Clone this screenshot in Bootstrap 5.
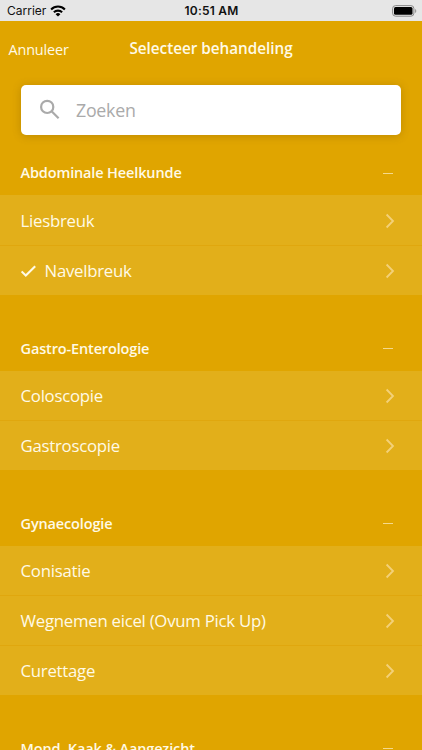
<!DOCTYPE html>
<html lang="nl">
<head>
<meta charset="utf-8">
<meta name="viewport" content="width=device-width, initial-scale=1">
<title>Selecteer behandeling</title>
<link href="https://cdn.jsdelivr.net/npm/bootstrap@5.3.0/dist/css/bootstrap.min.css" rel="stylesheet">
<style>
html, body { height: 100%; }
body { background: #e0a500; color: #fffae6; font-family: "Open Sans", sans-serif; overflow: hidden; }
.screen { height: 750px; }
.statusbar { height: 21px; background: #e6e6e6; color: #111; font-family: Inter, sans-serif; font-size: 12px; line-height: 21px; padding: 0 5px 0 7px; }
.statusbar .clock { font-weight: 600; font-size: 12px; letter-spacing: .22px; margin-right: 1px; }
.topbar { height: 64px; }
.cancel { font-size: 14.4px; letter-spacing: -.13px; line-height: 20px; padding: 19px 0 0 8.5px; }
.title { font-size: 15.3px; letter-spacing: -.03px; line-height: 20px; font-weight: 600; padding-top: 17px; }
.search { height: 50px; margin: 0 21px; border-radius: 5px; padding-left: 18px; box-shadow: 0 1px 8px rgba(110, 75, 0, .3); color: #aaa; }
.search input { font-size: 17.8px; letter-spacing: -.25px; color: #aaa; padding: 1px 0 0; margin-left: 15px; }
.search input::placeholder { color: #aaa; opacity: 1; }
.group-head { height: 76px; padding: 31px 29px 0 20.5px; font-size: 14.5px; letter-spacing: -.14px; font-weight: 600; }
.group-head.first { height: 60px; padding-top: 16px; }
.dash { width: 10px; height: 1px; background: #f4d98c; }
.treatments .list-group-item { height: 50px; padding: 1px 27px 0 20.5px; background: #e2af1a; color: #fffae6; font-size: 16.8px; letter-spacing: -.26px; border-color: #e0a70e; border-width: 1px 0 0; }
.treatments .list-group-item:first-child { height: 49px; border-top-width: 0; padding-top: 1px; }
.group-head.first + .treatments .list-group-item:first-child { height: 50px; padding-top: 2px; }
.treatments svg { flex: none; }
</style>
<script src="https://cdn.jsdelivr.net/npm/bootstrap@5.3.0/dist/js/bootstrap.bundle.min.js"></script>
</head>
<body>
<svg class="d-none">
  <symbol id="chevron" viewBox="0 0 10 16"><path d="M1.600 1.500L8 8l-6.400 6.500" fill="none" stroke="#f3d17a" stroke-width="1.800"/></symbol>
</svg>
<div class="screen overflow-hidden">
  <div class="statusbar row g-0">
    <div class="col d-flex align-items-center"><span>Carrier</span>
      <svg class="ms-1" width="16" height="12" viewBox="0 0 16 12"><g fill="none" stroke="#000" stroke-width="2.100"><path d="M1.100 4.400a9.800 9.800 0 0 1 13.800 0"/><path d="M3.900 7.300a5.800 5.800 0 0 1 8.200 0"/></g><path d="M8 11.600L5.600 9.200a3.400 3.400 0 0 1 4.800 0z"/></svg>
    </div>
    <div class="col-auto clock">10:51 AM</div>
    <div class="col d-flex align-items-center justify-content-end">
      <svg width="25" height="12" viewBox="0 0 25 12"><rect x=".6" y=".6" width="21.300" height="10.600" rx="3" fill="none" stroke="#888" stroke-width="1"/><rect x="2" y="2" width="18.500" height="7.800" rx="1.500"/><path d="M23.200 4v4c1.400-.6 1.400-3.400 0-4z" fill="#888"/></svg>
    </div>
  </div>
  <header class="topbar row g-0">
    <div class="col"><div class="cancel">Annuleer</div></div>
    <div class="col-auto title">Selecteer behandeling</div>
    <div class="col"></div>
  </header>
  <div class="search bg-white d-flex align-items-center">
    <svg class="flex-shrink-0" width="22" height="22" viewBox="0 0 22 22" fill="none" stroke="#aaa" stroke-width="2.200"><circle cx="8.200" cy="7.900" r="6.100"/><path d="M12.600 12.300l7 7"/></svg>
    <input class="form-control border-0 shadow-none bg-transparent" type="text" placeholder="Zoeken">
  </div>

  <div class="group-head first d-flex align-items-center justify-content-between"><span>Abdominale Heelkunde</span><i class="dash"></i></div>
  <div class="treatments list-group list-group-flush">
    <div class="list-group-item d-flex align-items-center"><span>Liesbreuk</span><svg class="ms-auto" width="10" height="16"><use href="#chevron"/></svg></div>
    <div class="list-group-item d-flex align-items-center"><svg width="16" height="14" viewBox="0 0 16 14"><path d="M.6 7.400l4.200 4.100L14.200 2.200" fill="none" stroke="#fffae6" stroke-width="2.100"/></svg><span class="ms-2">Navelbreuk</span><svg class="ms-auto" width="10" height="16"><use href="#chevron"/></svg></div>
  </div>

  <div class="group-head d-flex align-items-center justify-content-between"><span>Gastro-Enterologie</span><i class="dash"></i></div>
  <div class="treatments list-group list-group-flush">
    <div class="list-group-item d-flex align-items-center"><span>Coloscopie</span><svg class="ms-auto" width="10" height="16"><use href="#chevron"/></svg></div>
    <div class="list-group-item d-flex align-items-center"><span>Gastroscopie</span><svg class="ms-auto" width="10" height="16"><use href="#chevron"/></svg></div>
  </div>

  <div class="group-head d-flex align-items-center justify-content-between"><span>Gynaecologie</span><i class="dash"></i></div>
  <div class="treatments list-group list-group-flush">
    <div class="list-group-item d-flex align-items-center"><span>Conisatie</span><svg class="ms-auto" width="10" height="16"><use href="#chevron"/></svg></div>
    <div class="list-group-item d-flex align-items-center"><span>Wegnemen eicel (Ovum Pick Up)</span><svg class="ms-auto" width="10" height="16"><use href="#chevron"/></svg></div>
    <div class="list-group-item d-flex align-items-center"><span>Curettage</span><svg class="ms-auto" width="10" height="16"><use href="#chevron"/></svg></div>
  </div>

  <div class="group-head d-flex align-items-center justify-content-between"><span>Mond, Kaak &amp; Aangezicht</span><i class="dash"></i></div>
</div>
</body>
</html>
